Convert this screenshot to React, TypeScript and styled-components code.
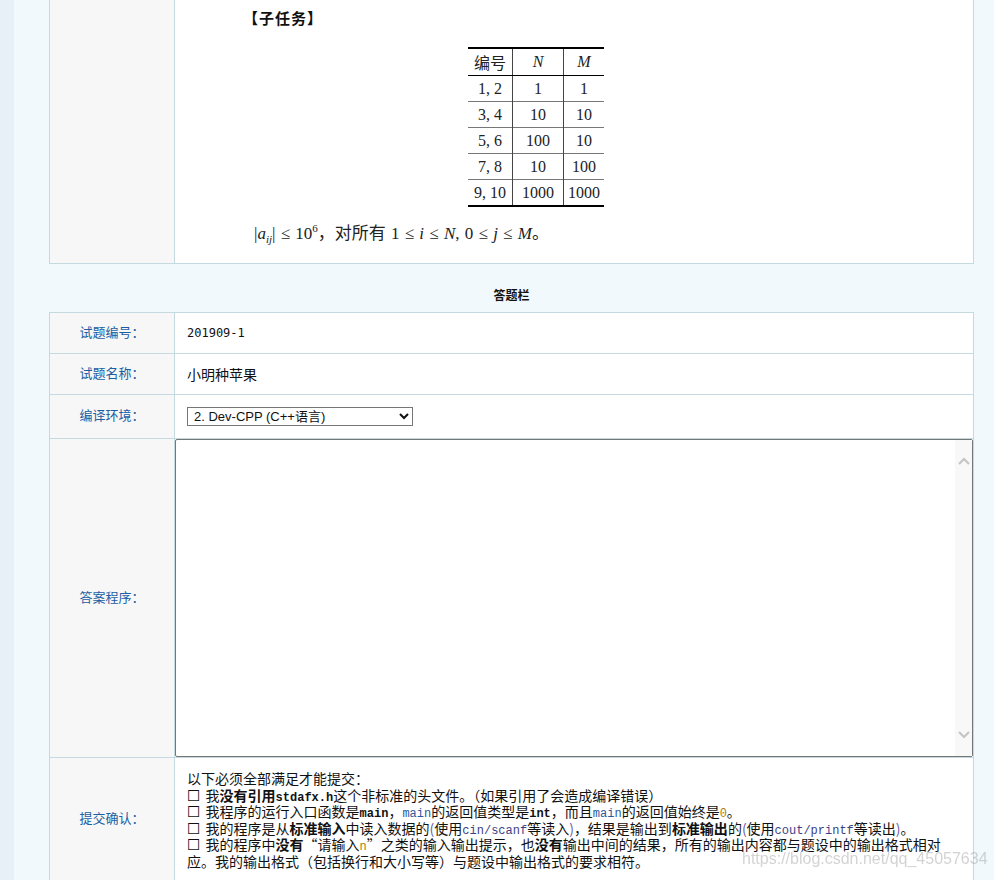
import React from "react";
import styled, { createGlobalStyle } from "styled-components";

const BORDER = "#c5d9e1";

const Global = createGlobalStyle`
  html, body { margin: 0; padding: 0; }
  body {
    background: #f2f9fc;
    font-family: "Noto Sans CJK SC", "Liberation Sans", sans-serif;
    color: #111;
  }
`;

const Page = styled.div`
  display: flex;
  min-height: 880px;
`;

const SideStrip = styled.div`
  width: 14px;
  flex: none;
  background: #e8f0f7;
`;

const Main = styled.div`
  flex: 1;
  background: #f2f9fc;
  padding: 0 20px 0 35px;
`;

const ProblemTable = styled.div`
  display: grid;
  grid-template-columns: 125px 1fr;
  height: 264px;
  box-sizing: border-box;
  border: 1px solid ${BORDER};
  border-top: none;
`;

const LabelCell = styled.div`
  display: flex;
  align-items: center;
  justify-content: center;
  background: #f7f7f7;
  border-right: 1px solid ${BORDER};
  color: #1b5ea3;
  font-size: 13px;
  line-height: 16px;
  padding-bottom: 3px;
  box-sizing: border-box;
`;

const ProblemContent = styled.div`
  background: #fff;
  padding: 8px 0 0 68px;
  display: flex;
  flex-direction: column;
  align-items: flex-start;
`;

const SubTitle = styled.div`
  font-size: 15px;
  font-weight: bold;
  line-height: 20px;
  letter-spacing: 1px;
  color: #111;
`;

const SubTable = styled.table`
  margin: 19px 0 0 225px;
  border-collapse: collapse;
  border-top: 2.5px solid #000;
  border-bottom: 2.5px solid #000;
  font-family: "Liberation Serif", "Noto Sans CJK SC", serif;
  font-size: 16px;
  color: #222;
`;

const SubHead = styled.th<{ $w: number; $italic?: boolean }>`
  width: ${(p) => p.$w}px;
  height: 26px;
  padding: 0;
  font-weight: normal;
  font-style: ${(p) => (p.$italic ? "italic" : "normal")};
  border-bottom: 1.5px solid #000;
  text-align: center;
  & + & { border-left: 1px solid #444; }
`;

const SubCell = styled.td`
  height: 25px;
  padding: 0;
  text-align: center;
  border-top: 1px solid #777;
  & + & { border-left: 1px solid #444; }
`;

const Formula = styled.div`
  margin: 16px 0 0 11px;
  font-family: "Liberation Serif", "Noto Sans CJK SC", serif;
  font-size: 17px;
  line-height: 22px;
  word-spacing: 1px;
  color: #222;
  i { font-style: italic; }
  sub, sup { font-size: 11px; line-height: 0; }
`;

const SectionTitle = styled.div`
  height: 48px;
  box-sizing: border-box;
  padding-top: 24px;
  text-align: center;
  font-size: 12px;
  line-height: 14px;
  font-weight: bold;
`;

const FormTable = styled.div`
  border: 1px solid ${BORDER};
  border-bottom: none;
  display: flex;
  flex-direction: column;
`;

const FormRow = styled.div<{ $h?: number }>`
  display: grid;
  grid-template-columns: 125px 1fr;
  min-height: ${(p) => (p.$h ? `${p.$h}px` : "auto")};
  border-bottom: 1px solid ${BORDER};
`;

const ValueCell = styled.div`
  background: #fff;
  display: flex;
  align-items: center;
  padding-left: 12px;
  font-size: 14px;
`;

const Mono = styled.span`
  font-family: "DejaVu Sans Mono", "Liberation Mono", monospace;
  font-size: 12px;
`;

const Select = styled.select`
  width: 226px;
  height: 19px;
  box-sizing: border-box;
  border: 1px solid #767676;
  border-radius: 0;
  background: #fff;
  font-family: "Liberation Sans", "Noto Sans CJK SC", sans-serif;
  font-size: 13px;
  color: #111;
  padding: 0 0 0 2px;
  margin: 0;
`;

const EditorCell = styled.div`
  background: #fff;
  position: relative;
  display: flex;
`;

const CodeArea = styled.textarea`
  flex: 1;
  box-sizing: border-box;
  margin: 0;
  border: 1px solid #767676;
  border-radius: 2px;
  resize: none;
  overflow: hidden;
  background: #fff;
  outline: none;
  font-family: "Liberation Mono", monospace;
`;

const ScrollTrack = styled.div`
  position: absolute;
  top: 1px;
  right: 1px;
  bottom: 1px;
  width: 17px;
  background: #f8f8f8;
  display: flex;
  flex-direction: column;
  justify-content: space-between;
  align-items: center;
  padding: 17px 0 17px;
  box-sizing: border-box;
`;

const ConfirmCell = styled.div`
  background: #fff;
  padding: 12px 0 12px 12px;
  font-size: 14px;
  line-height: 16.5px;
  white-space: nowrap;
`;

const Line = styled.div`
  height: 16.5px;
  line-height: 16.5px;
`;

const Box = styled.span`
  font-family: "DejaVu Sans", sans-serif;
  font-size: 15px;
  line-height: 10px;
  margin-right: 2px;
`;

const Code = styled.span<{ $c?: string; $b?: boolean }>`
  font-family: "Liberation Mono", "DejaVu Sans Mono", monospace;
  font-size: 12px;
  line-height: 12px;
  color: ${(p) => p.$c || "#111"};
  font-weight: ${(p) => (p.$b ? "bold" : "normal")};
`;

const Paren = styled.span`
  color: #6d5ea6;
`;

const Watermark = styled.div`
  position: fixed;
  left: 742px;
  top: 850px;
  font-family: "Liberation Sans", sans-serif;
  font-size: 16px;
  color: rgba(150, 150, 150, 0.42);
  pointer-events: none;
`;

const Chevron = ({ up }: { up?: boolean }) => (
  <svg width="12" height="8" viewBox="0 0 12 8">
    <polyline
      points={up ? "1,7 6,2 11,7" : "1,1 6,6 11,1"}
      fill="none"
      stroke="#c4c4c4"
      strokeWidth="2"
    />
  </svg>
);

const rows = [
  ["1, 2", "1", "1"],
  ["3, 4", "10", "10"],
  ["5, 6", "100", "10"],
  ["7, 8", "10", "100"],
  ["9, 10", "1000", "1000"],
];

export default function App() {
  return (
    <>
      <Global />
      <Page>
        <SideStrip />
        <Main>
          <ProblemTable>
            <LabelCell />
            <ProblemContent>
              <SubTitle>【子任务】</SubTitle>
              <SubTable>
                <thead>
                  <tr>
                    <SubHead $w={44}>编号</SubHead>
                    <SubHead $w={50} $italic>N</SubHead>
                    <SubHead $w={40} $italic>M</SubHead>
                  </tr>
                </thead>
                <tbody>
                  {rows.map((r) => (
                    <tr key={r[0]}>
                      {r.map((c, i) => (
                        <SubCell key={i}>{c}</SubCell>
                      ))}
                    </tr>
                  ))}
                </tbody>
              </SubTable>
              <Formula>
                |<i>a</i>
                <sub>
                  <i>ij</i>
                </sub>
                | ≤ 10<sup>6</sup>，对所有 1 ≤ <i>i</i> ≤ <i>N</i>, 0 ≤ <i>j</i> ≤ <i>M</i>。
              </Formula>
            </ProblemContent>
          </ProblemTable>

          <SectionTitle>答题栏</SectionTitle>

          <FormTable>
            <FormRow $h={40}>
              <LabelCell>试题编号：</LabelCell>
              <ValueCell>
                <Mono>201909-1</Mono>
              </ValueCell>
            </FormRow>
            <FormRow $h={40}>
              <LabelCell>试题名称：</LabelCell>
              <ValueCell>小明种苹果</ValueCell>
            </FormRow>
            <FormRow $h={43}>
              <LabelCell>编译环境：</LabelCell>
              <ValueCell>
                <Select defaultValue="2">
                  <option value="2">2. Dev-CPP (C++语言)</option>
                </Select>
              </ValueCell>
            </FormRow>
            <FormRow $h={318}>
              <LabelCell>答案程序：</LabelCell>
              <EditorCell>
                <CodeArea spellCheck={false} />
                <ScrollTrack>
                  <Chevron up />
                  <Chevron />
                </ScrollTrack>
              </EditorCell>
            </FormRow>
            <FormRow>
              <LabelCell>提交确认：</LabelCell>
              <ConfirmCell>
                <Line>以下必须全部满足才能提交：</Line>
                <Line>
                  <Box>☐</Box> 我<b>没有引用</b>
                  <Code $b>stdafx.h</Code>这个非标准的头文件。（如果引用了会造成编译错误）
                </Line>
                <Line>
                  <Box>☐</Box> 我程序的运行入口函数是<Code $b>main</Code>，
                  <Code $c="#2b5a9e">main</Code>的返回值类型是<Code $b>int</Code>，而且
                  <Code $c="#2b5a9e">main</Code>的返回值始终是<Code $c="#b07d0c">0</Code>。
                </Line>
                <Line>
                  <Box>☐</Box> 我的程序是从<b>标准输入</b>中读入数据的<Paren>(</Paren>使用
                  <Code $c="#3c3f86">cin/scanf</Code>等读入<Paren>)</Paren>，结果是输出到
                  <b>标准输出</b>的<Paren>(</Paren>使用<Code $c="#3c3f86">cout/printf</Code>
                  等读出<Paren>)</Paren>。
                </Line>
                <Line>
                  <Box>☐</Box> 我的程序中<b>没有</b>“请输入<Code $c="#b07d0c">n</Code>”之类的输入输出提示，也
                  <b>没有</b>输出中间的结果，所有的输出内容都与题设中的输出格式相对
                </Line>
                <Line>应。我的输出格式（包括换行和大小写等）与题设中输出格式的要求相符。</Line>
              </ConfirmCell>
            </FormRow>
          </FormTable>
        </Main>
      </Page>
      <Watermark>https://blog.csdn.net/qq_45057634</Watermark>
    </>
  );
}
